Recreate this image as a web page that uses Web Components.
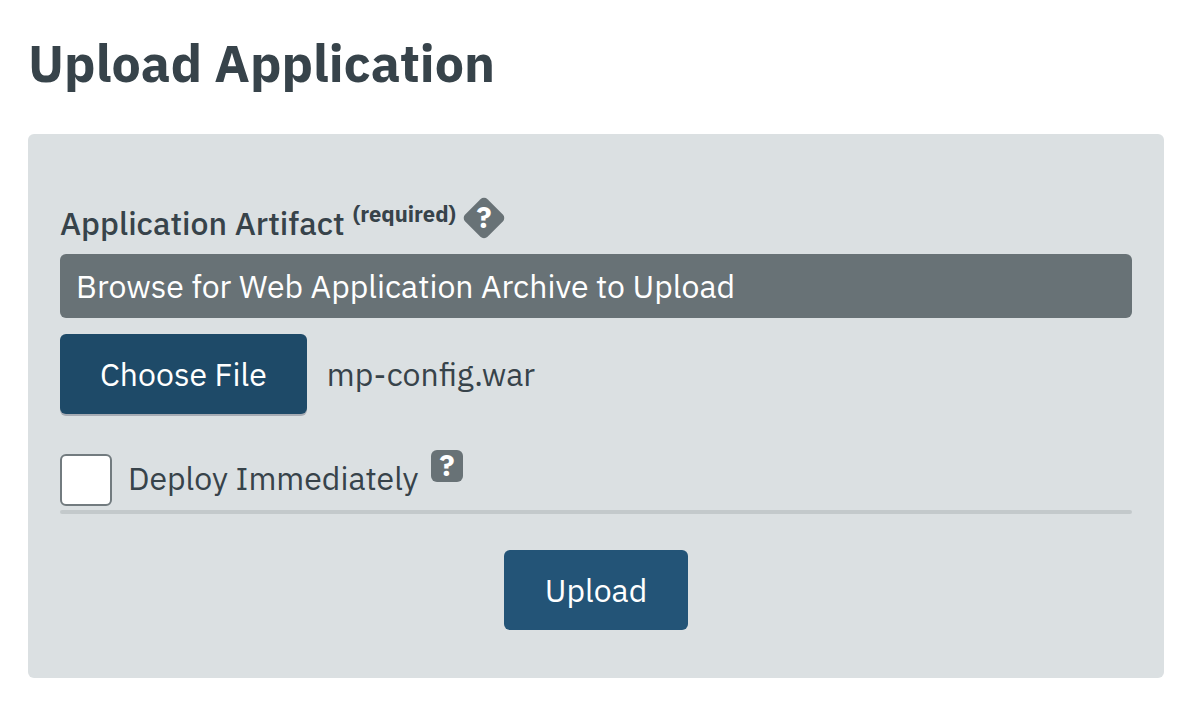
<!DOCTYPE html>
<html lang="en">
<head>
<meta charset="utf-8">
<meta name="viewport" content="width=device-width, initial-scale=1">
<title>Upload Application</title>
<style>
  body { margin: 0; background: #fff; color: #37434a; font-family: "IBM Plex Sans", Roboto, "Noto Sans", sans-serif; font-size: 32px; line-height: 40px; }
</style>
</head>
<body>
<upload-page></upload-page>

<template id="page-template">
  <style>
    :host { display: block; padding: 27px 20px 24px 28px; }
    h1 { margin: 0 0 35px; font-size: 52px; line-height: 72px; font-weight: 700; }
  </style>
  <h1>Upload Application</h1>
  <upload-form></upload-form>
</template>

<template id="form-template">
  <style>
    :host { display: block; background: #dbe0e2; border-radius: 6px; }
    form { display: flex; flex-direction: column; padding: 60px 32px 48px; }
    .deploy { display: flex; align-items: flex-start; gap: 12px; margin-top: 36px; padding-bottom: 4px; }
    hr { width: 100%; height: 4px; margin: 0 0 36px; border: 0; border-radius: 2px; background: #c3c9cb; }
    action-button { align-self: center; }
  </style>
  <form>
    <file-field>
      Application Artifact
      <help-tip slot="help" shape="diamond" label="About the application artifact"></help-tip>
      <span slot="hint">Browse for Web Application Archive to Upload</span>
    </file-field>
    <div class="deploy">
      <check-field>Deploy Immediately</check-field>
      <help-tip label="About immediate deployment"></help-tip>
    </div>
    <hr>
    <action-button>Upload</action-button>
  </form>
</template>

<template id="help-template">
  <style>
    :host { display: block; }
    button { display: block; margin: 0; padding: 0; border: 0; background: none; font: inherit; cursor: help; }
    svg { display: block; overflow: visible; }
    .shape { fill: #687276; }
    text { fill: #fff; font-size: 30px; font-weight: 700; text-anchor: middle; }
  </style>
  <button type="button"></button>
</template>

<template id="file-template">
  <style>
    :host { display: block; }
    .heading { display: flex; align-items: flex-start; gap: 8px; height: 60px; }
    .name { display: flex; gap: 8px; font-weight: 500; }
    .name span { padding-top: 9px; }
    .name small { font-size: 22px; font-weight: 700; }
    ::slotted(help-tip) { margin-top: 4px; }
    .bar { display: block; padding: 12px 16px; border-radius: 6px; background: #687276; color: #fff; }
    .picker { display: flex; align-items: center; gap: 20px; margin-top: 16px; }
    input { display: none; }
  </style>
  <div class="heading">
    <label class="name" for="file"><span><slot></slot></span><small>(required)</small></label>
    <slot name="help"></slot>
  </div>
  <label class="bar" for="file"><slot name="hint"></slot></label>
  <div class="picker">
    <input type="file" id="file" accept=".war" required>
    <action-button variant="dark">Choose File</action-button>
    <output for="file">mp-config.war</output>
  </div>
</template>

<template id="check-template">
  <style>
    :host { display: block; }
    label { display: flex; align-items: flex-start; gap: 16px; padding-top: 4px; }
    span { padding-top: 4px; }
    input { appearance: none; box-sizing: border-box; flex: none; width: 52px; height: 52px; margin: 0; border: 2px solid #727b7f; border-radius: 6px; background: #fff; }
    input:checked { background: #235477; box-shadow: inset 0 0 0 8px #fff; }
  </style>
  <label><input type="checkbox"><span><slot></slot></span></label>
</template>

<template id="button-template">
  <style>
    :host { display: block; }
    button { display: block; min-width: 184px; margin: 0; padding: 20px 40px; border: 0; border-radius: 6px; background: #235477; color: #fff; font: inherit; cursor: pointer; }
    :host([variant="dark"]) button { background: #1e4a68; box-shadow: 0 2px 0 #a7acb4; }
  </style>
  <button type="button"><slot></slot></button>
</template>

<script>
  class TemplateElement extends HTMLElement {
    constructor() {
      super();
      const template = document.getElementById(this.constructor.template);
      this.attachShadow({ mode: "open" }).append(template.content.cloneNode(true));
    }
  }

  customElements.define("action-button", class extends TemplateElement {
    static template = "button-template";
  });

  customElements.define("help-tip", class extends TemplateElement {
    static template = "help-template";
    connectedCallback() {
      const button = this.shadowRoot.querySelector("button");
      button.setAttribute("aria-label", this.getAttribute("label"));
      button.innerHTML = this.getAttribute("shape") === "diamond"
        ? '<svg width="40" height="40" viewBox="0 0 40 40"><rect class="shape" x="4.2" y="4.2" width="31.6" height="31.6" rx="5" transform="rotate(45 20 20)"/><text x="20" y="30">?</text></svg>'
        : '<svg width="32" height="32" viewBox="0 0 32 32"><rect class="shape" width="32" height="32" rx="6"/><text x="16" y="26">?</text></svg>';
    }
  });

  customElements.define("check-field", class extends TemplateElement {
    static template = "check-template";
  });

  customElements.define("file-field", class extends TemplateElement {
    static template = "file-template";
    connectedCallback() {
      const input = this.shadowRoot.querySelector("input");
      const name = this.shadowRoot.querySelector("output");
      this.shadowRoot.querySelector("action-button").onclick = () => input.click();
      input.onchange = () => { name.textContent = input.files.length ? input.files[0].name : ""; };
    }
  });

  customElements.define("upload-form", class extends TemplateElement {
    static template = "form-template";
  });

  customElements.define("upload-page", class extends TemplateElement {
    static template = "page-template";
  });
</script>
</body>
</html>
